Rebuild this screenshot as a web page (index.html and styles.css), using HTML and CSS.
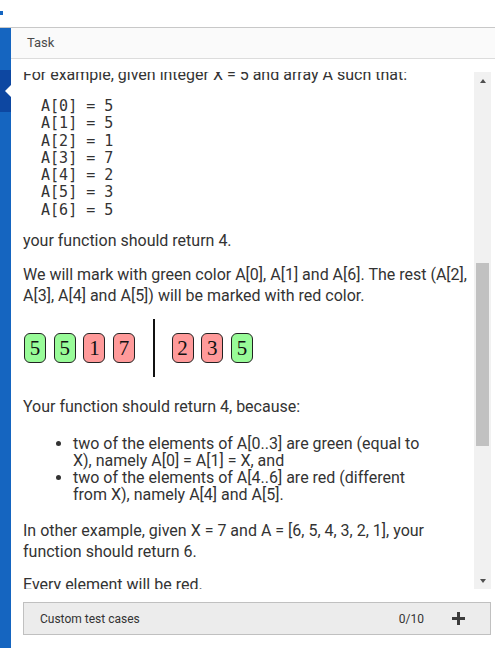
FILE: index.html
```html
<!DOCTYPE html>
<html>
<head>
<meta charset="utf-8">
<link rel="stylesheet" href="styles.css">
</head>
<body>
<div class="topbar"><span class="logo-bit"></span></div>
<div class="main">
  <div class="rail">
    <div class="rail-seg"></div>
    <div class="rail-seg rail-active"></div>
    <div class="rail-seg rail-rest"></div>
  </div>
  <div class="panel">
    <div class="panel-head">Task</div>
    <div class="panel-body">
      <div class="desc">
        <div class="desc-inner">
          <p class="p-first">For example, given integer X = 5 and array A such that:</p>
<pre class="code">  A[0] = 5
  A[1] = 5
  A[2] = 1
  A[3] = 7
  A[4] = 2
  A[5] = 3
  A[6] = 5</pre>
          <p class="p-after-code">your function should return 4.</p>
          <p>We will mark with green color A[0], A[1] and A[6]. The rest (A[2], A[3], A[4] and A[5]) will be marked with red color.</p>
          <div class="figure">
            <div class="group">
              <span class="box green">5</span>
              <span class="box green">5</span>
              <span class="box red">1</span>
              <span class="box red">7</span>
            </div>
            <div class="divider"></div>
            <div class="group">
              <span class="box red">2</span>
              <span class="box red">3</span>
              <span class="box green">5</span>
            </div>
          </div>
          <p class="p-after-fig">Your function should return 4, because:</p>
          <ul class="reasons">
            <li>two of the elements of A[0..3] are green (equal to X), namely A[0] = A[1] = X, and</li>
            <li>two of the elements of A[4..6] are red (different from X), namely A[4] and A[5].</li>
          </ul>
          <p class="p-after-list">In other example, given X = 7 and A = [6, 5, 4, 3, 2, 1], your function should return 6.</p>
          <p>Every element will be red.</p>
        </div>
      </div>
      <div class="scrollbar">
        <div class="sb-arrow sb-up"></div>
        <div class="sb-track"><div class="sb-thumb"></div></div>
        <div class="sb-arrow sb-down"></div>
      </div>
    </div>
    <div class="custom">
      <span class="custom-label">Custom test cases</span>
      <span class="custom-count">0/10</span>
      <svg class="plus" width="13" height="13" viewBox="0 0 13 13"><rect x="0" y="5" width="13" height="3" fill="#3c3c3c"/><rect x="5" y="0" width="3" height="13" fill="#3c3c3c"/></svg>
    </div>
  </div>
</div>
</body>
</html>
```
FILE: styles.css
```css
html, body {
  margin: 0;
  padding: 0;
  background: #fff;
}
body {
  width: 495px;
  height: 648px;
  overflow: hidden;
  font-family: Roboto, "Liberation Sans", sans-serif;
  color: #333;
}
.topbar {
  height: 16px;
  padding-top: 11px;
  border-bottom: 1px solid #c8c8c8;
}
.logo-bit {
  display: block;
  width: 3px;
  height: 4px;
  background: #1565c0;
}
.main {
  display: flex;
  height: 620px;
}
.rail {
  width: 11px;
  display: flex;
  flex-direction: column;
}
.rail-seg {
  height: 42px;
  background: #1565c0;
}
.rail-active {
  background: #0d47a1;
  position: relative;
}
.rail-active::after {
  content: "";
  position: absolute;
  right: 0;
  top: 15px;
  border-style: solid;
  border-width: 6px 6px 6px 0;
  border-color: transparent #fff transparent transparent;
}
.rail-rest {
  flex: 1;
}
.panel {
  flex: 1;
  display: flex;
  flex-direction: column;
}
.panel-head {
  height: 30px;
  line-height: 30px;
  background: #fafafa;
  border-bottom: 1px solid #dcdcdc;
  padding-left: 16px;
  font-size: 13px;
  color: #4a4a4a;
}
.panel-body {
  display: flex;
  margin-top: 13px;
  height: 517px;
  padding-right: 4px;
}
.desc {
  flex: 1;
  overflow: hidden;
  padding-left: 12px;
  padding-right: 4px;
}
.desc-inner {
  margin-top: -8px;
  font-size: 16px;
  line-height: 21.3px;
}
.desc p {
  margin: 12px 0 0;
}
.desc p.p-first {
  margin-top: 0;
}
.code {
  margin: 12.7px 0 0;
  font-family: "DejaVu Sans Mono", monospace;
  font-size: 15px;
  line-height: 17.3px;
  color: #333;
}
.desc p.p-after-code {
  margin-top: 11.4px;
}
.figure {
  display: flex;
  align-items: center;
  height: 58px;
  margin-top: 13px;
  padding-left: 1px;
}
.group {
  display: flex;
  gap: 7.7px;
}
.box {
  width: 20px;
  height: 28px;
  border: 1px solid #222;
  border-radius: 6px;
  display: flex;
  align-items: center;
  justify-content: center;
  font-family: "Liberation Serif", "DejaVu Serif", serif;
  font-size: 21px;
  color: #111;
}
.green {
  background: #98fb98;
}
.red {
  background: #ff9a9a;
}
.divider {
  width: 1.5px;
  height: 58px;
  background: #111;
  margin: 0 17px 0 18px;
}
.desc p.p-after-fig {
  margin-top: 19px;
}
.reasons {
  margin: 17.7px 0 0;
  padding: 0 40px 0 50px;
  line-height: 17px;
}
.desc p.p-after-list {
  margin-top: 16.5px;
}
.scrollbar {
  width: 17px;
  background: #f1f1f1;
  display: flex;
  flex-direction: column;
  align-items: center;
}
.sb-arrow {
  height: 17px;
  width: 17px;
  display: flex;
  align-items: center;
  justify-content: center;
}
.sb-arrow::before {
  content: "";
  border-style: solid;
  border-color: transparent;
}
.sb-up::before {
  border-width: 0 3.5px 4px 3.5px;
  border-bottom-color: #505050;
}
.sb-down::before {
  border-width: 4px 3.5px 0 3.5px;
  border-top-color: #505050;
}
.sb-track {
  flex: 1;
  width: 17px;
  display: flex;
  justify-content: center;
}
.sb-thumb {
  width: 13px;
  height: 183px;
  margin-top: 174px;
  background: #c1c1c1;
}
.custom {
  height: 31px;
  margin: 13px 4px 0 12px;
  border: 1px solid #c0c0c0;
  background: #ececec;
  display: flex;
  align-items: center;
  font-size: 12px;
  color: #333;
}
.custom-label {
  padding-left: 16px;
  flex: 1;
}
.custom-count {
  margin-right: 28px;
}
.plus {
  margin-right: 25px;
}
```
